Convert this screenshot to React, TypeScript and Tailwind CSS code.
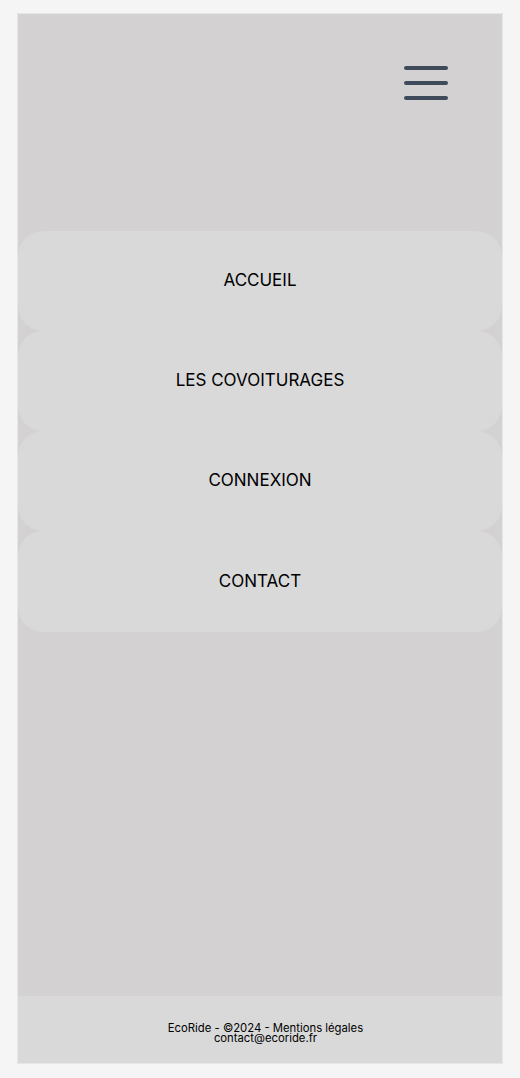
const links = ['ACCUEIL', 'LES COVOITURAGES', 'CONNEXION', 'CONTACT'];

export default function App() {
  return (
    <div className="min-h-[1078px] bg-[#f5f5f5] pt-[13px] pb-[14px] px-[17px]" style={{ fontFamily: 'Inter, "Noto Sans", sans-serif' }}>
      <div className="h-[1051px] flex flex-col border border-[#e6e6e6] bg-[#d3d1d2]">
        <header className="h-[216.5px] flex justify-end pt-[52px] pr-[54px]">
          <button className="flex flex-col gap-[11px] h-fit" aria-label="Menu">
            <span className="block h-[4px] w-[44px] rounded-full bg-[#3f4b5a]" />
            <span className="block h-[4px] w-[44px] rounded-full bg-[#3f4b5a]" />
            <span className="block h-[4px] w-[44px] rounded-full bg-[#3f4b5a]" />
          </button>
        </header>
        <nav className="flex flex-col">
          {links.map(link => (
            <a
              key={link}
              href="#"
              className="h-[100.3px] flex items-center justify-center rounded-[25px] bg-[#d9d9d9] text-[17px] text-black"
            >
              {link}
            </a>
          ))}
        </nav>
        <div className="flex-1" />
        <footer className="h-[67px] bg-[#d9d9d9] flex flex-col items-center justify-center pt-[7px] pl-[11px] text-[11.3px] leading-[10px] text-black">
          <p>EcoRide - ©2024 - Mentions légales</p>
          <p>contact@ecoride.fr</p>
        </footer>
      </div>
    </div>
  );
}
